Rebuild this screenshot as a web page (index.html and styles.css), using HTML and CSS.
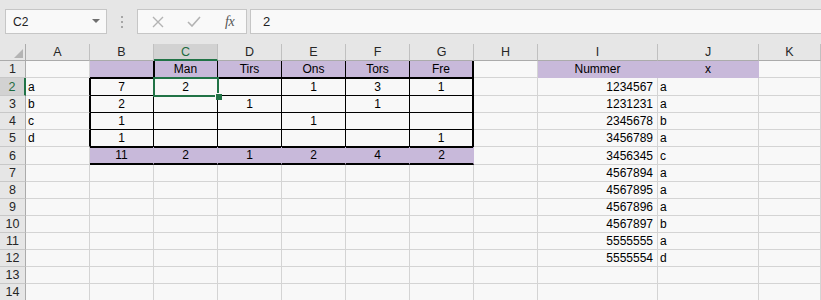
FILE: index.html
```html
<!DOCTYPE html>
<html lang="da">
<head>
<meta charset="utf-8">
<title>Excel</title>
<link rel="stylesheet" href="styles.css">
</head>
<body>
<div class="bar">
  <div class="namebox"><span>C2</span><svg class="dd" width="8" height="4" viewBox="0 0 8 4"><path d="M0 0H8L4 4Z" fill="#6f6f6f"/></svg></div>
  <div class="sep"><i></i><i></i><i></i></div>
  <div class="fbtns">
    <svg class="ic" width="12" height="12" viewBox="0 0 12 12"><path d="M1 1L11 11M11 1L1 11" stroke="#b3b3b3" stroke-width="1.4" fill="none"/></svg>
    <svg class="ic" width="14" height="11" viewBox="0 0 14 11"><path d="M1 6L5 10L13 1" stroke="#b3b3b3" stroke-width="1.6" fill="none"/></svg>
    <span class="fx">fx</span>
  </div>
  <div class="finput">2</div>
</div>
<div class="sheet">
  <div class="corner"><span class="tri"></span></div>
  <div class="ch">A</div><div class="ch">B</div><div class="ch selh">C</div><div class="ch">D</div><div class="ch">E</div><div class="ch">F</div><div class="ch">G</div><div class="ch">H</div><div class="ch">I</div><div class="ch">J</div><div class="ch">K</div>

  <div class="rh">1</div>
  <div class="c"></div>
  <div class="c p bk-r bk-b"></div>
  <div class="c p tk-l bk-r bk-b ctr">Man</div>
  <div class="c p bk-r bk-b ctr">Tirs</div>
  <div class="c p bk-r bk-b ctr">Ons</div>
  <div class="c p bk-r bk-b ctr">Tors</div>
  <div class="c p bk-r2 bk-b ctr">Fre</div>
  <div class="c"></div>
  <div class="c p ctr">Nummer</div>
  <div class="c p ctr">x</div>
  <div class="c"></div>

  <div class="rh selr">2</div>
  <div class="c bk-r">a</div>
  <div class="c tk-l tk-t bk-r bk-b ctr">7</div>
  <div class="c tk-t bk-r bk-b ctr cur">2</div>
  <div class="c tk-t bk-r bk-b"></div>
  <div class="c tk-t bk-r bk-b ctr">1</div>
  <div class="c tk-t bk-r bk-b ctr">3</div>
  <div class="c tk-t bk-r2 bk-b ctr">1</div>
  <div class="c"></div>
  <div class="c rt">1234567</div>
  <div class="c">a</div>
  <div class="c"></div>

  <div class="rh">3</div>
  <div class="c bk-r">b</div>
  <div class="c tk-l bk-r bk-b ctr">2</div>
  <div class="c bk-r bk-b"></div>
  <div class="c bk-r bk-b ctr">1</div>
  <div class="c bk-r bk-b"></div>
  <div class="c bk-r bk-b ctr">1</div>
  <div class="c bk-r2 bk-b"></div>
  <div class="c"></div>
  <div class="c rt">1231231</div>
  <div class="c">a</div>
  <div class="c"></div>

  <div class="rh">4</div>
  <div class="c bk-r">c</div>
  <div class="c tk-l bk-r bk-b ctr">1</div>
  <div class="c bk-r bk-b"></div>
  <div class="c bk-r bk-b"></div>
  <div class="c bk-r bk-b ctr">1</div>
  <div class="c bk-r bk-b"></div>
  <div class="c bk-r2 bk-b"></div>
  <div class="c"></div>
  <div class="c rt">2345678</div>
  <div class="c">b</div>
  <div class="c"></div>

  <div class="rh">5</div>
  <div class="c bk-r">d</div>
  <div class="c tk-l bk-r bk-b ctr">1</div>
  <div class="c bk-r bk-b"></div>
  <div class="c bk-r bk-b"></div>
  <div class="c bk-r bk-b"></div>
  <div class="c bk-r bk-b"></div>
  <div class="c bk-r2 bk-b ctr">1</div>
  <div class="c"></div>
  <div class="c rt">3456789</div>
  <div class="c">a</div>
  <div class="c"></div>

  <div class="rh">6</div>
  <div class="c"></div>
  <div class="c p tk-t bk-b2 ctr">11</div>
  <div class="c p tk-t bk-b2 ctr">2</div>
  <div class="c p tk-t bk-b2 ctr">1</div>
  <div class="c p tk-t bk-b2 ctr">2</div>
  <div class="c p tk-t bk-b2 ctr">4</div>
  <div class="c p tk-t bk-b2 ctr">2</div>
  <div class="c"></div>
  <div class="c rt">3456345</div>
  <div class="c">c</div>
  <div class="c"></div>

  <div class="rh">7</div>
  <div class="c"></div><div class="c"></div><div class="c"></div><div class="c"></div><div class="c"></div><div class="c"></div><div class="c"></div><div class="c"></div>
  <div class="c rt">4567894</div><div class="c">a</div><div class="c"></div>

  <div class="rh">8</div>
  <div class="c"></div><div class="c"></div><div class="c"></div><div class="c"></div><div class="c"></div><div class="c"></div><div class="c"></div><div class="c"></div>
  <div class="c rt">4567895</div><div class="c">a</div><div class="c"></div>

  <div class="rh">9</div>
  <div class="c"></div><div class="c"></div><div class="c"></div><div class="c"></div><div class="c"></div><div class="c"></div><div class="c"></div><div class="c"></div>
  <div class="c rt">4567896</div><div class="c">a</div><div class="c"></div>

  <div class="rh">10</div>
  <div class="c"></div><div class="c"></div><div class="c"></div><div class="c"></div><div class="c"></div><div class="c"></div><div class="c"></div><div class="c"></div>
  <div class="c rt">4567897</div><div class="c">b</div><div class="c"></div>

  <div class="rh">11</div>
  <div class="c"></div><div class="c"></div><div class="c"></div><div class="c"></div><div class="c"></div><div class="c"></div><div class="c"></div><div class="c"></div>
  <div class="c rt">5555555</div><div class="c">a</div><div class="c"></div>

  <div class="rh">12</div>
  <div class="c"></div><div class="c"></div><div class="c"></div><div class="c"></div><div class="c"></div><div class="c"></div><div class="c"></div><div class="c"></div>
  <div class="c rt">5555554</div><div class="c">d</div><div class="c"></div>

  <div class="rh">13</div>
  <div class="c"></div><div class="c"></div><div class="c"></div><div class="c"></div><div class="c"></div><div class="c"></div><div class="c"></div><div class="c"></div>
  <div class="c"></div><div class="c"></div><div class="c"></div>

  <div class="rh">14</div>
  <div class="c"></div><div class="c"></div><div class="c"></div><div class="c"></div><div class="c"></div><div class="c"></div><div class="c"></div><div class="c"></div>
  <div class="c"></div><div class="c"></div><div class="c"></div>
</div>
</body>
</html>
```
FILE: styles.css
```css
* { box-sizing: border-box; }
html, body {
  margin: 0;
  padding: 0;
  width: 821px;
  height: 300px;
  overflow: hidden;
  background: #e6e6e6;
  font-family: "Liberation Sans", Arial, sans-serif;
  font-size: 12px;
  color: #000;
}

/* formula bar */
.bar {
  height: 44px;
  display: flex;
  align-items: flex-start;
  padding: 9px 0 0 5px;
  background: #e6e6e6;
}
.namebox {
  width: 102px;
  height: 25px;
  border: 1px solid #c6c6c6;
  background: #f9f9f9;
  display: flex;
  align-items: center;
  justify-content: space-between;
  padding: 0 6px 0 7px;
  font-size: 12px;
  color: #222;
}
.dd { margin-top: -1px; }
.sep {
  width: 30px;
  height: 25px;
  display: flex;
  flex-direction: column;
  align-items: center;
  justify-content: center;
  gap: 3px;
}
.sep i {
  display: block;
  width: 2px;
  height: 2px;
  background: #a6a6a6;
}
.fbtns {
  width: 110px;
  height: 25px;
  border: 1px solid #c6c6c6;
  background: #f9f9f9;
  display: flex;
  align-items: center;
  padding-left: 14px;
  gap: 23px;
}
.fx {
  font-family: "Liberation Serif", "Times New Roman", serif;
  font-style: italic;
  font-size: 14px;
  color: #555;
  letter-spacing: -0.5px;
  margin-left: 1px;
}
.finput {
  flex: 1;
  height: 25px;
  margin-left: 3px;
  border: 1px solid #c6c6c6;
  border-right: none;
  background: #f9f9f9;
  display: flex;
  align-items: center;
  padding-left: 12px;
  font-size: 13px;
  color: #222;
}

/* sheet grid */
.sheet {
  display: grid;
  grid-template-columns: 26px repeat(8, 64px) 120px 101px 1fr;
  grid-template-rows: 17px 17px 18px 17px 17px 17px 18px 17px 17px 17px 17px 17px 17px 17px 17px;
  background: #f8f8f8;
}
.corner {
  background: #e6e6e6;
  border-right: 1px solid #ababab;
  border-bottom: 1px solid #ababab;
  display: flex;
  align-items: flex-end;
  justify-content: flex-end;
  padding: 0 2px 2px 0;
}
.tri {
  width: 9px;
  height: 9px;
  background: #b4b4b4;
  clip-path: polygon(100% 0, 100% 100%, 0 100%);
}
.ch {
  background: #e6e6e6;
  border-right: 1px solid #c0c0c0;
  border-bottom: 1px solid #ababab;
  display: flex;
  align-items: center;
  justify-content: center;
  font-size: 12.5px;
  color: #262626;
}
.ch.selh {
  background: #d2d2d2;
  color: #1e6b41;
  border-bottom: 2px solid #217346;
}
.rh {
  background: #e6e6e6;
  border-right: 1px solid #ababab;
  border-bottom: 1px solid #c8c8c8;
  display: flex;
  align-items: center;
  justify-content: center;
  font-size: 12.5px;
  color: #262626;
}
.rh.selr {
  background: #d2d2d2;
  color: #1e6b41;
  border-right: 2px solid #217346;
}

.c {
  border-right: 1px solid #d4d4d4;
  border-bottom: 1px solid #d4d4d4;
  display: flex;
  align-items: center;
  padding: 0 2px;
  white-space: nowrap;
  overflow: visible;
  box-shadow: var(--sl, 0 0 #0000), var(--st, 0 0 #0000);
}
.ctr { justify-content: center; }
.rt { justify-content: flex-end; padding-right: 4px; }

.p {
  background: #c8b9da;
  border-color: #c8b9da;
}
.bk-r { border-right-color: #000; }
.bk-r2 { border-right: 2px solid #000; }
.bk-b { border-bottom-color: #000; }
.bk-b2 { border-bottom: 2px solid #000; }
.tk-l { --sl: inset 1px 0 0 #000; }
.tk-t { --st: inset 0 1px 0 #000; }

/* active cell outline and fill handle (overlay) */
.cur { position: relative; }
.cur::after {
  content: "";
  position: absolute;
  left: -1px;
  top: -1px;
  right: -2px;
  bottom: -2px;
  border: 2px solid #217346;
}
.cur::before {
  content: "";
  position: absolute;
  left: 61px;
  top: 15px;
  width: 6px;
  height: 6px;
  background: #217346;
  border-left: 1px solid #f8f8f8;
  border-top: 1px solid #f8f8f8;
  z-index: 2;
}
```
